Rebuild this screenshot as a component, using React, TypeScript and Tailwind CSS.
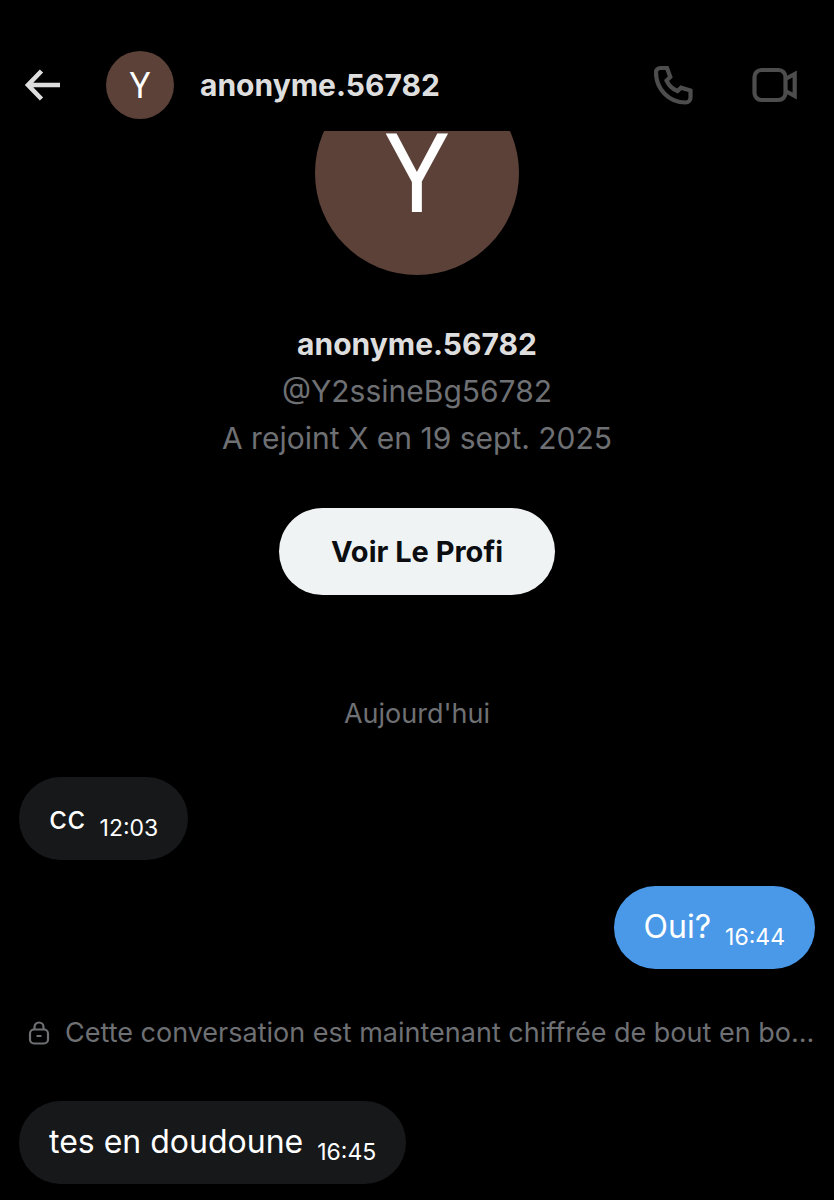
interface Message {
  id: number;
  text: string;
  time: string;
  mine?: boolean;
}

const messagesBefore: Message[] = [
  { id: 1, text: 'cc', time: '12:03' },
  { id: 2, text: 'Oui?', time: '16:44', mine: true },
];

const messagesAfter: Message[] = [{ id: 3, text: 'tes en doudoune', time: '16:45' }];

function BackIcon() {
  return (
    <svg className="w-9 h-9" viewBox="0 0 36 36" fill="none" stroke="currentColor" strokeWidth={4.6} aria-hidden="true">
      <path d="M17.5 4L4 18l13.5 14M4 18H36" />
    </svg>
  );
}

function PhoneIcon() {
  return (
    <svg className="w-10 h-10" viewBox="1 0 40 40" fill="none" stroke="currentColor" strokeWidth={4.2} aria-hidden="true">
      <path d="M7.5 3H14L17.3 12L13.6 15.6C15.5 20 19.5 24 24.5 26L28 22.7L37.5 25.6V32.5C37.5 35.5 35.5 37.5 32.5 37.5C16 37.5 3 24 3 7.5C3 4.8 4.8 3 7.5 3Z" />
    </svg>
  );
}

function VideoIcon() {
  return (
    <svg className="w-12 h-10" viewBox="0 0 48 40" fill="none" stroke="currentColor" strokeWidth={4.2} aria-hidden="true">
      <rect x="4.5" y="5" width="31" height="30" rx="7" />
      <path d="M35.5 14L44.700 9V31L35.5 26" />
    </svg>
  );
}

function LockIcon() {
  return (
    <svg className="w-6 h-6 shrink-0" viewBox="0 0 24 24" fill="none" stroke="currentColor" strokeWidth={2.2} aria-hidden="true">
      <rect x="3" y="8.5" width="18" height="14" rx="4" />
      <path d="M7.5 8.5V6a4.500 4.500 0 0 1 9 0v2.500M9.500 15h5" />
    </svg>
  );
}

function MessageBubble({ message }: { message: Message }) {
  return (
    <li className={`flex ${message.mine ? 'justify-end' : 'justify-start'}`}>
      <div
        className={`flex items-end gap-3.5 h-[83px] px-7.5 rounded-full ${
          message.mine ? 'bg-[#4a99e9]' : 'bg-[#16181a]'
        }`}
      >
        <p className="text-[32px] leading-10 pb-5.5">{message.text}</p>
        <time className="text-[23px] leading-8 pb-4">{message.time}</time>
      </div>
    </li>
  );
}

export default function App() {
  return (
    <div className="min-h-screen overflow-hidden bg-black text-white font-['Inter',sans-serif]">
      <header className="relative z-10 flex items-center bg-black pt-[51px] pb-3 pl-6 pr-9">
        <button type="button" aria-label="Retour" className="text-[#dedede]">
          <BackIcon />
        </button>
        <div className="flex items-center justify-center size-17 ml-11.5 rounded-full bg-[#5b4138] text-4xl font-['Noto_Sans',sans-serif]">
          Y
        </div>
        <h1 className="flex-1 ml-6.5 text-[30px] leading-10 font-bold text-[#dedede]">anonyme.56782</h1>
        <div className="flex items-center gap-14 text-[#4d4d4d]">
          <button type="button" aria-label="Appel audio">
            <PhoneIcon />
          </button>
          <button type="button" aria-label="Appel vidéo">
            <VideoIcon />
          </button>
        </div>
      </header>

      <main className="-mt-15 pb-4">
        {/* Profile card, partly scrolled under the header */}
        <section className="flex flex-col items-center">
          <div className="flex items-center justify-center size-51 pb-2 rounded-full bg-[#5b4138] text-[110px] leading-none font-['Noto_Sans',sans-serif]">
            Y
          </div>
          <h2 className="mt-11.5 text-[30px] leading-[47px] font-bold text-[#dedede]">anonyme.56782</h2>
          <p className="text-[30px] leading-[47px] text-[#6e7074]">@Y2ssineBg56782</p>
          <p className="text-[30px] leading-[47px] text-[#6e7074]">A rejoint X en 19 sept. 2025</p>
          <button
            type="button"
            className="mt-11.5 px-13 h-[87px] rounded-full bg-[#eff3f4] text-[29px] font-bold text-[#0b0d10]"
          >
            Voir Le Profi
          </button>
        </section>

        <p className="mt-[99px] text-center text-[27px] leading-10 text-[#6e7074]">Aujourd'hui</p>

        <ul className="mt-[43px] px-[19px] space-y-6.5">
          {messagesBefore.map((message) => (
            <MessageBubble key={message.id} message={message} />
          ))}
        </ul>

        <div className="flex items-center gap-3.5 mt-11 pl-[27px] pr-4 text-[#6e7074]">
          <LockIcon />
          <p className="flex-1 text-[27px] leading-10 truncate">
            Cette conversation est maintenant chiffrée de bout en bo...
          </p>
        </div>

        <ul className="mt-12 px-[19px] space-y-6.5">
          {messagesAfter.map((message) => (
            <MessageBubble key={message.id} message={message} />
          ))}
        </ul>
      </main>
    </div>
  );
}
